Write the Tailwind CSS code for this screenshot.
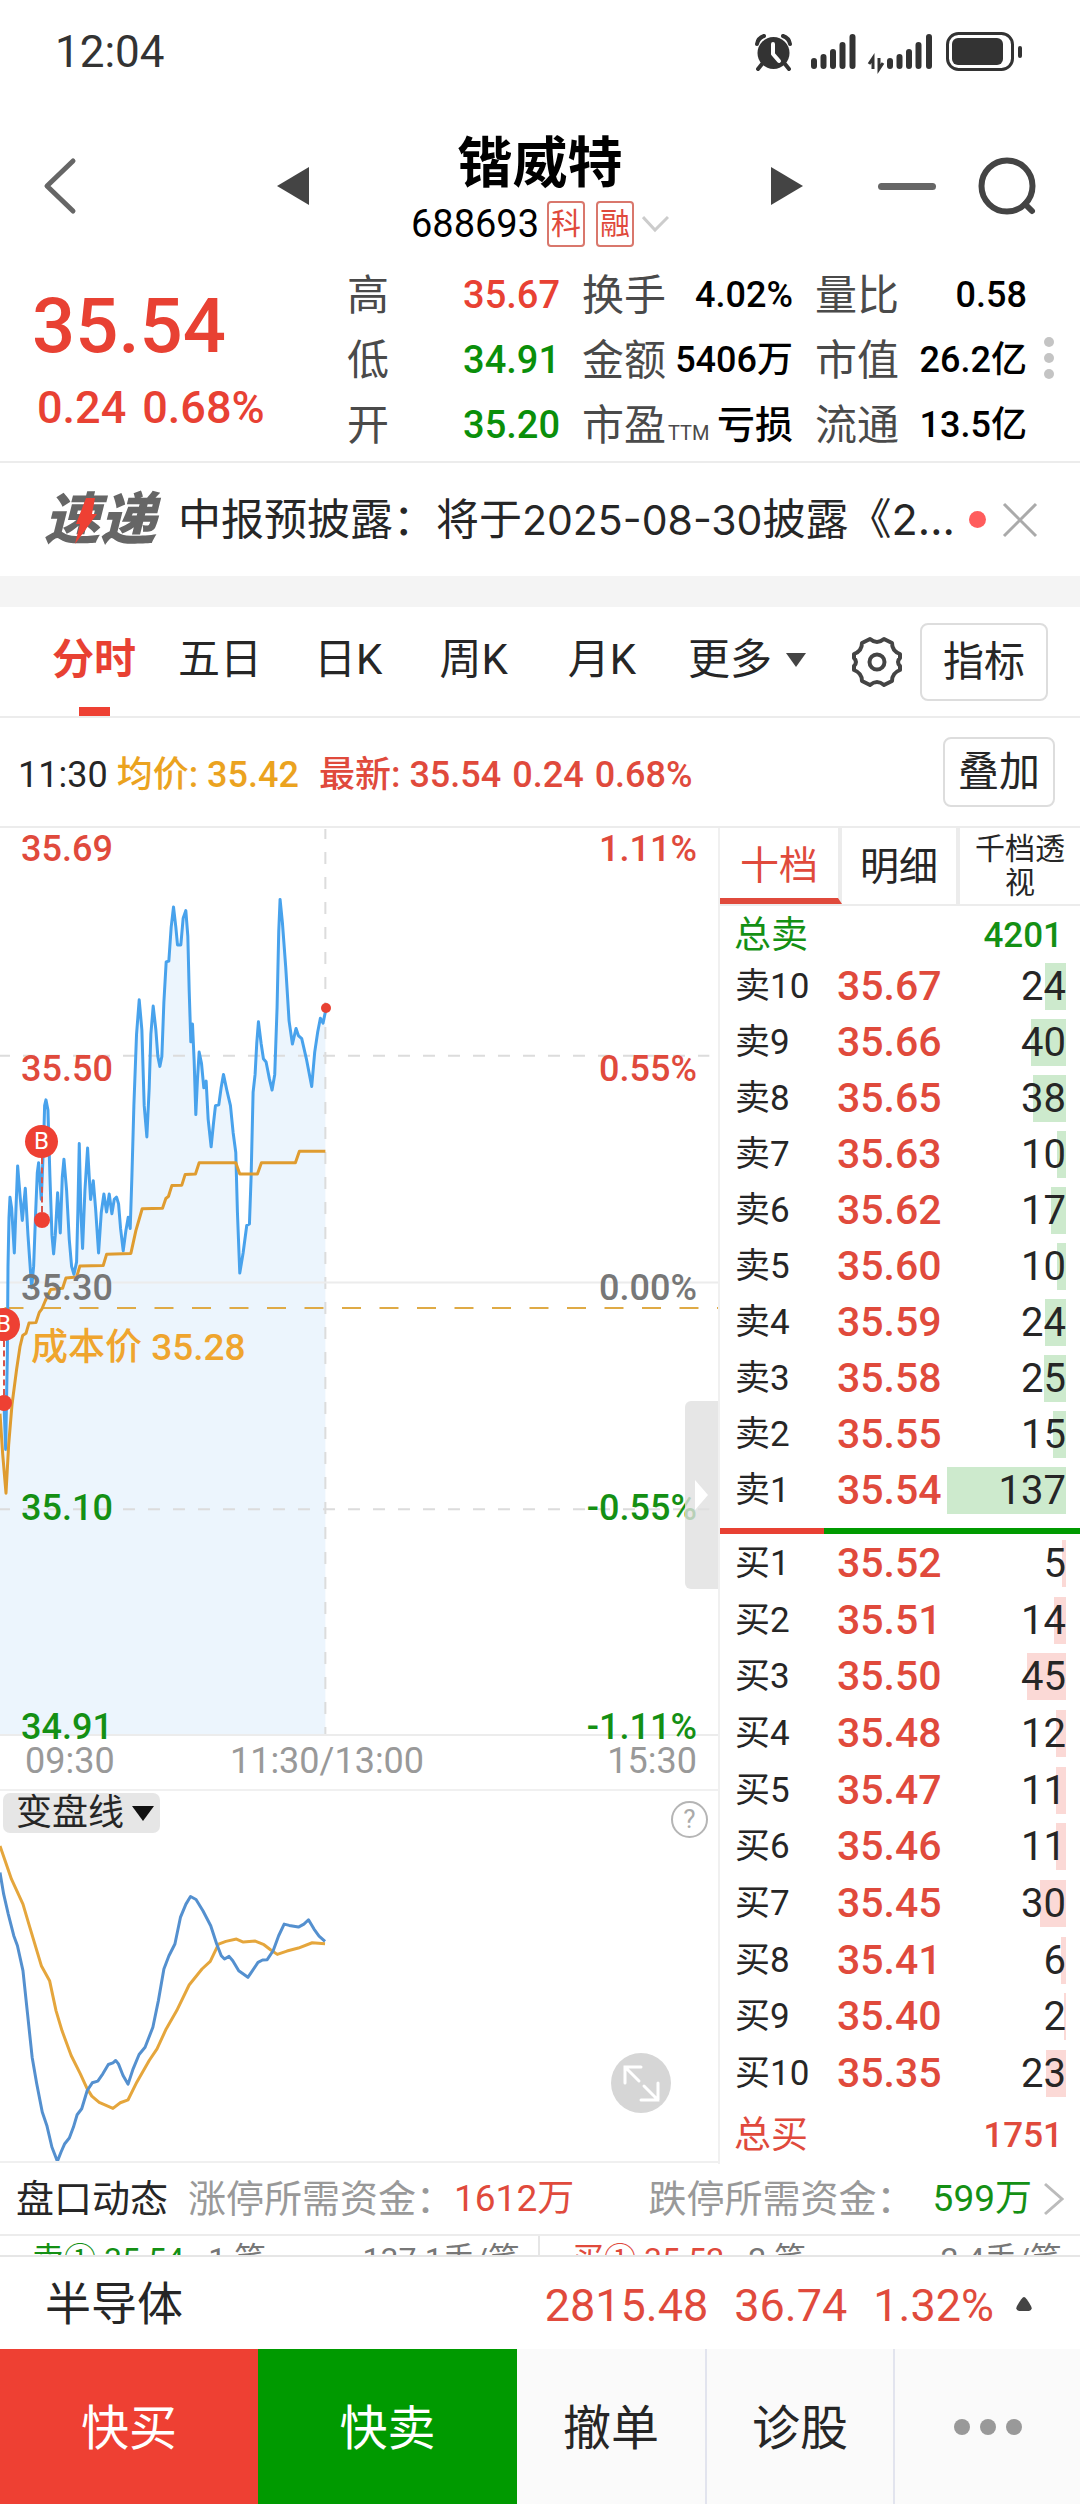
<!DOCTYPE html>
<html lang="zh-CN">
  <head>
    <meta charset="UTF-8" />
    <meta name="viewport" content="width=device-width, initial-scale=1.0" />
    <script src="https://cdn.jsdelivr.net/npm/@tailwindcss/browser@4"></script>
    <title>锴威特 688693</title>
  </head>
  <body class="bg-white text-[#262626] font-['Roboto','Noto_Sans_CJK_SC',sans-serif]">
    <!-- status bar -->
    <div class="flex items-center justify-between h-[104px] pl-[55px] pr-[58px] text-[#333]">
      <span class="text-[44px] leading-[52px]">12:04</span>
      <svg class="w-[268px] h-[44px]" viewBox="754 30 268 44" fill="#333" aria-hidden="true">
        <circle cx="773.5" cy="53" r="16" />
        <path d="M762 64l-4 5M785 64l4 5" stroke="#333" stroke-width="4" stroke-linecap="round" />
        <path d="M757 44q1-6 7-8M790 44q-1-6-7-8" stroke="#333" stroke-width="4" stroke-linecap="round" fill="none" />
        <path d="M773 44v10l6 7" stroke="#fff" stroke-width="4" stroke-linecap="round" stroke-linejoin="round" fill="none" />
        <path d="M814 61v5M823.500 57v9M833 52v14M842.500 45v21M852.500 37v29M890 61v5M899.500 57v9M909 52v14M918.500 45v21M929 37v29" stroke="#333" stroke-width="6" stroke-linecap="round" />
        <path d="M873 69V58l-4 6M879 58v11l4-6" stroke="#333" stroke-width="3" fill="none" />
        <rect x="947.500" y="33.500" width="65" height="36" rx="11" fill="none" stroke="#333" stroke-width="3" />
        <rect x="952" y="38" width="51" height="27" rx="6" />
        <rect x="1018" y="46" width="4" height="12" rx="2" />
      </svg>
    </div>

    <!-- title bar -->
    <header class="flex items-center h-[164px] pl-[40px] pr-[42px]">
      <button aria-label="返回" class="w-[40px]">
        <svg class="w-[40px] h-[60px]" viewBox="0 0 40 60" fill="none" stroke="#666" stroke-width="5" stroke-linecap="round" stroke-linejoin="round"><path d="M33 5L7 30l26 25" /></svg>
      </button>
      <div class="flex-1 flex items-center justify-between pl-[196px] pr-[74px]">
        <button aria-label="上一只">
          <svg class="w-[34px] h-[40px]" viewBox="0 0 34 40" fill="#444"><path d="M33 1v38L1 20z" /></svg>
        </button>
        <div class="flex flex-col items-center pt-[10px]">
          <h1 class="text-[55px] leading-[66px] font-bold text-black">锴威特</h1>
          <div class="flex items-center h-[56px] text-black">
            <span class="text-[38px] leading-[48px]">688693</span>
            <span class="ml-[8px] w-[38px] h-[46px] border-2 border-[#d9776c] rounded-[4px] text-[30px] leading-[42px] text-center text-[#e04a3c]">科</span>
            <span class="ml-[11px] w-[38px] h-[46px] border-2 border-[#d9776c] rounded-[4px] text-[30px] leading-[42px] text-center text-[#e04a3c]">融</span>
            <svg class="ml-[8px] w-[27px] h-[18px]" viewBox="0 0 27 18" fill="none" stroke="#ccc" stroke-width="3"><path d="M1 2l12 13L26 2" /></svg>
          </div>
        </div>
        <button aria-label="下一只">
          <svg class="w-[34px] h-[40px]" viewBox="0 0 34 40" fill="#444"><path d="M1 1v38l32-19z" /></svg>
        </button>
      </div>
      <div class="flex items-center gap-[40px]">
        <button aria-label="最小化"><span class="block w-[58px] h-[7px] rounded-full bg-[#666]"></span></button>
        <button aria-label="搜索">
          <svg class="w-[62px] h-[60px]" viewBox="0 0 62 60" fill="none" stroke="#444" stroke-width="6" stroke-linecap="round"><circle cx="31" cy="30" r="25.500" /><path d="M49 48l7 7" /></svg>
        </button>
      </div>
    </header>

    <!-- quote -->
    <section class="relative flex h-[195px] border-b-2 border-[#ececec]">
      <div class="w-[347px] pl-[32px] text-[#e84133] font-medium">
        <p class="pt-[12px] text-[76px] leading-[92px]">35.54</p>
        <p class="flex gap-[16px] pl-[5px] text-[45px] leading-[72px]"><span>0.24</span><span>0.68%</span></p>
      </div>
      <dl class="flex-1 grid grid-cols-[213px_211px_212px] gap-x-[22px] h-[195px] -mt-[5px] text-[42px] leading-[65px] text-[#4a4a4a]">
        <div class="flex justify-between"><dt>高</dt><dd class="text-[38px] font-medium text-[#e84133]">35.67</dd></div>
        <div class="flex justify-between"><dt>换手</dt><dd class="text-[36px] font-medium text-black">4.02%</dd></div>
        <div class="flex justify-between"><dt>量比</dt><dd class="text-[36px] font-medium text-black">0.58</dd></div>
        <div class="flex justify-between"><dt>低</dt><dd class="text-[38px] font-medium text-[#0a8f0a]">34.91</dd></div>
        <div class="flex justify-between"><dt>金额</dt><dd class="text-[36px] font-medium text-black">5406万</dd></div>
        <div class="flex justify-between"><dt>市值</dt><dd class="text-[36px] font-medium text-black">26.2亿</dd></div>
        <div class="flex justify-between"><dt>开</dt><dd class="text-[38px] font-medium text-[#0a8f0a]">35.20</dd></div>
        <div class="flex justify-between"><dt>市盈<span class="ml-[2px] text-[20px]">TTM</span></dt><dd class="text-[38px] font-medium text-black">亏损</dd></div>
        <div class="flex justify-between"><dt>流通</dt><dd class="text-[36px] font-medium text-black">13.5亿</dd></div>
      </dl>
      <button aria-label="更多行情" class="absolute right-[26px] top-[69px] flex flex-col gap-[6px]">
        <span class="size-[10px] rounded-full bg-[#c4c4c4]"></span>
        <span class="size-[10px] rounded-full bg-[#c4c4c4]"></span>
        <span class="size-[10px] rounded-full bg-[#c4c4c4]"></span>
      </button>
    </section>

    <!-- news -->
    <section class="flex items-center h-[113px] pl-[44px] pr-[42px]">
      <div class="relative w-[118px] text-[56px] leading-[60px] font-black italic text-[#666]">
        速递
        <svg class="absolute left-[28px] top-[8px] w-[26px] h-[46px]" viewBox="0 0 26 46" fill="#ee4033"><path d="M14 0h9l-3 16h5L3 46l5-20H4z" /></svg>
      </div>
      <a href="#" class="ml-[16px] flex-1 whitespace-nowrap text-[43px] leading-[60px] font-['Inter','Noto_Sans_CJK_SC',sans-serif]">中报预披露：将于<span class="text-[41px]">2025-08-30</span>披露《2…</a>
      <span class="size-[17px] rounded-full bg-[#ff5c5c]"></span>
      <button aria-label="关闭" class="ml-[16px]">
        <svg class="w-[36px] h-[36px]" viewBox="0 0 36 36" stroke="#aaa" stroke-width="3"><path d="M2 2l32 32M34 2L2 34" /></svg>
      </button>
    </section>
    <div class="h-[31px] bg-[#f4f4f4]"></div>

    <!-- period tabs -->
    <nav class="flex items-center h-[111px] pl-[52px] pr-[32px] border-b-2 border-[#ececec] text-[42px] leading-[60px]">
      <button class="relative h-full pb-[4px] font-bold text-[#e84133]">分时<span class="absolute left-[27px] bottom-0 w-[31px] h-[9px] bg-[#ee4033]"></span></button>
      <button class="ml-[42px] pb-[4px]">五日</button>
      <button class="ml-[52px] pb-[4px]">日K</button>
      <button class="ml-[57px] pb-[4px]">周K</button>
      <button class="ml-[60px] pb-[4px]">月K</button>
      <button class="ml-[52px] pb-[4px] flex items-center gap-[14px]">更多
        <svg class="w-[20px] h-[14px]" viewBox="0 0 20 14" fill="#444"><path d="M0 0h20L10 14z" /></svg>
      </button>
      <button aria-label="设置" class="ml-auto">
        <svg class="w-[54px] h-[54px]" viewBox="0 0 54 54" fill="none" stroke="#444" stroke-width="4" stroke-linejoin="round">
          <path d="M20 4q7 6 14 0l8 4q0 8 8 11v4q-4 4 0 8v4q-8 3-8 11l-8 4q-7-6-14 0l-8-4q0-8-8-11v-4q4-4 0-8v-4q8-3 8-11z" />
          <circle cx="27" cy="27" r="7.500" />
        </svg>
      </button>
      <button class="ml-[16px] w-[128px] h-[78px] border-2 border-[#ddd] rounded-[8px] text-[41px]">指标</button>
    </nav>

    <div class="flex items-center justify-between h-[108px] pl-[18px] pr-[25px] text-[36px] leading-[48px] font-medium">
      <p class="flex pt-[5px]">
        <span class="font-normal">11:30</span>
        <span class="ml-[9px] text-[#eba31f]">均价: 35.42</span>
        <span class="ml-[20px] flex gap-[11px] text-[#e04a3c]"><span>最新: 35.54</span><span>0.24</span><span>0.68%</span></span>
      </p>
      <button class="w-[112px] h-[70px] border-2 border-[#ddd] rounded-[8px] text-[41px] font-normal">叠加</button>
    </div>

    <main class="grid grid-cols-3 border-t-2 border-[#ececec]">
      <!-- charts -->
      <div class="col-span-2 border-r-2 border-[#f0f0f0]">
        <div class="relative h-[908px]">
          <svg class="w-full h-full" viewBox="0 18 2156 2034" preserveAspectRatio="none" fill="none">
            <polygon id="area" fill="#ecf5fd" />
            <g stroke="#dcdcdc" stroke-width="2">
              <path d="M0 528H2130M0 1544H2130M977 20V2052" stroke-dasharray="12 13" stroke-dashoffset="2" vector-effect="non-scaling-stroke" />
              <path d="M0 1036H2160M0 2050H2160" stroke="#ececec" vector-effect="non-scaling-stroke" />
            </g>
            <path d="M0 1093H2160" stroke="#dfaa45" stroke-width="2" stroke-dasharray="19 18.500" stroke-dashoffset="33" vector-effect="non-scaling-stroke" />
            <polyline id="price" stroke="#48a2ec" stroke-width="3" stroke-linejoin="round" vector-effect="non-scaling-stroke" points="12,1307 17,1410 22,1200 24,1000 27,890 30,845 35,870 43,970 48,870 53,775 60,840 67,897 76,825 84,930 95,1048 101,1000 107,880 112,790 116,768 124,850 131,720 134,640 138,627 144,650 150,800 156,930 161,972 166,930 173,835 181,925 187,800 192,760 200,830 208,940 215,1000 222,1018 230,990 234,870 238,725 243,880 248,960 255,830 263,735 268,800 272,850 280,808 287,870 296,970 304,880 312,838 320,878 328,838 336,882 343,850 350,845 356,860 362,915 370,965 378,920 385,890 391,915 396,800 402,640 410,480 418,403 426,470 433,640 441,710 448,600 453,480 460,417 468,470 474,530 480,552 486,530 492,410 499,318 507,316 514,240 521,195 528,240 533,280 543,280 550,220 558,203 564,260 568,380 573,497 578,457 583,540 588,660 593,580 598,520 605,545 612,600 619,585 625,670 634,732 641,680 647,640 657,638 664,600 671,570 681,605 692,640 700,700 708,745 713,880 720,1015 730,970 741,908 749,905 754,800 760,610 766,570 771,500 776,452 784,500 791,535 799,542 809,580 817,605 825,570 832,420 837,250 841,178 848,230 858,330 868,450 878,502 889,467 896,483 906,490 920,535 936,597 945,520 954,475 962,444 970,455 977,430" />
            <polyline stroke="#df9c30" stroke-width="3" stroke-linejoin="round" vector-effect="non-scaling-stroke" points="0,1330 8,1420 18,1508 26,1400 36,1310 50,1230 60,1180 68,1155 78,1150 87,1127 108,1126 118,1103 126,1095 136,1077 152,1052 188,1049 198,1026 230,1024 240,999 310,998 320,973 393,971 408,920 427,871 488,870 498,848 506,843 516,819 546,818 556,794 587,793 598,768 708,768 720,793 773,793 785,768 887,768 899,742 977,742" />
          </svg>

          <div class="absolute inset-x-0 top-[2px] h-[916px] flex flex-col justify-between px-[21px] text-[36px] leading-[38px] font-medium">
            <p class="flex justify-between text-[#e04a3c]"><span>35.69</span><span>1.11%</span></p>
            <p class="flex justify-between text-[#e04a3c]"><span>35.50</span><span>0.55%</span></p>
            <p class="flex justify-between text-[#777]"><span>35.30</span><span>0.00%</span></p>
            <p class="flex justify-between text-[#149014]"><span>35.10</span><span>-0.55%</span></p>
            <p class="flex justify-between text-[#149014]"><span>34.91</span><span>-1.11%</span></p>
          </div>
          <p class="absolute left-[31px] top-[496px] text-[37px] leading-[48px] font-medium text-[#efa52e]">成本价 35.28</p>

          <!-- buy markers -->
          <div class="absolute left-[25px] top-[297px] w-[33px] flex flex-col items-center">
            <span class="size-[33px] rounded-full bg-[#ee4033] text-white text-[24px] leading-[33px] text-center">B</span>
            <span class="h-[54px] border-l-2 border-dashed border-[#d9534a]"></span>
            <span class="size-[16px] rounded-full bg-[#ee4033]"></span>
          </div>
          <div class="absolute left-0 top-[480px] w-[20px] h-[104px] overflow-hidden">
            <div class="absolute right-0 top-0 w-[33px] flex flex-col items-center">
              <span class="size-[33px] rounded-full bg-[#ee4033] text-white text-[24px] leading-[33px] text-center">B</span>
              <span class="h-[54px] border-l-2 border-dashed border-[#d9534a]"></span>
              <span class="size-[16px] rounded-full bg-[#ee4033]"></span>
            </div>
          </div>
          <span class="absolute left-[321px] top-[175px] size-[10px] rounded-full bg-[#e84133]"></span>

          <button aria-label="收起盘口" class="absolute right-0 top-[573px] w-[33px] h-[188px] flex items-center justify-center rounded-l-[6px] bg-[#e0e0e0]/80">
            <svg class="w-[13px] h-[30px]" viewBox="0 0 13 30" fill="#fff"><path d="M0 0v30l13-15z" /></svg>
          </button>
        </div>

        <div class="flex justify-between h-[53px] pl-[25px] pr-[21px] text-[36px] leading-[50px] text-[#999]">
          <span>09:30</span><span class="-ml-[68px]">11:30/13:00</span><span>15:30</span>
        </div>

        <div class="relative h-[374px] border-y-2 border-[#f0f0f0]">
          <svg class="w-full h-full" viewBox="0 30 1564 1112" preserveAspectRatio="none" fill="none" stroke-width="3" stroke-linejoin="round">
            <polyline stroke="#e5a63c" vector-effect="non-scaling-stroke" points="0,195 10,235 25,295 50,370 65,440 90,555 108,600 122,690 135,750 155,825 175,880 190,925 200,947 216,966 246,984 262,967 279,958 298,905 325,840 342,805 362,745 385,690 412,613 440,565 458,542 476,490 492,482 515,475 530,484 556,481 575,492 590,508 604,521 625,511 650,502 680,486 708,489" />
            <polyline stroke="#5490cf" vector-effect="non-scaling-stroke" points="0,275 8,340 18,400 30,465 38,495 50,570 60,700 70,830 80,910 92,995 102,1035 113,1100 125,1143 133,1115 141,1090 151,1073 160,1040 168,1003 178,985 190,930 201,907 213,902 224,880 236,852 246,847 252,840 258,850 268,885 279,911 290,865 303,822 316,800 333,740 345,660 357,565 368,525 381,490 393,410 405,370 415,347 427,356 442,390 459,435 472,490 482,525 489,535 499,527 507,540 520,570 540,590 550,570 562,545 572,538 582,537 595,510 607,465 619,430 630,434 650,439 662,430 672,417 684,445 695,466 708,482" />
          </svg>
          <button class="absolute left-[3px] top-[2px] flex items-center gap-[8px] h-[40px] pl-[13px] pr-[6px] rounded-[7px] bg-[#e6e6e6] text-[36px] leading-[40px]">变盘线
            <svg class="w-[22px] h-[15px]" viewBox="0 0 22 15" fill="#111"><path d="M0 0h22L11 15z" /></svg>
          </button>
          <button aria-label="说明" class="absolute right-[10px] top-[10px] size-[37px] rounded-full border-2 border-[#b5b5b5] text-[26px] leading-[33px] text-[#aaa]">?</button>
          <button aria-label="全屏" class="absolute right-[47px] top-[262px]">
            <svg class="size-[60px]" viewBox="0 0 60 60" fill="none" stroke="#fff" stroke-width="3" stroke-linecap="round"><circle cx="30" cy="30" r="30" fill="#d6d6d6" stroke="none" /><path d="M30 14H14v16M14 14l14 14M30 47h17V30M47 47L33 33" /></svg>
          </button>
        </div>
      </div>

      <!-- order book -->
      <div class="flex flex-col">
        <div class="grid grid-cols-[122fr_118fr_120fr] h-[78px] border-b-2 border-[#ececec] divide-x-4 divide-[#ececec]">
          <button class="pt-[6px] border-b-6 border-b-[#e04a3c] text-[39px] leading-[48px] text-[#e04a3c]">十档</button>
          <button class="pt-[2px] text-[39px] leading-[48px]">明细</button>
          <button class="px-[12px] text-[30px] leading-[34px]">千档透视</button>
        </div>
        <div class="flex justify-between items-center h-[52px] pl-[14px] pr-[17px] pt-[8px] text-[37px] text-[#149014]">
          <span>总卖</span><span class="text-[35px] font-medium">4201</span>
        </div>
        <table class="w-full"><tbody id="asks"></tbody></table>
        <div class="flex h-[6px] mt-[10px]"><span class="w-[29%] bg-[#e84133]"></span><span class="flex-1 bg-[#009a00]"></span></div>
        <table class="w-full h-[567px] mt-px"><tbody id="bids"></tbody></table>
        <div class="flex-1 flex justify-between items-center pl-[14px] pr-[17px] pt-[6px] text-[37px] text-[#e04a3c]">
          <span>总买</span><span class="text-[35px] font-medium">1751</span>
        </div>
      </div>
    </main>

    <!-- order flow -->
    <a href="#" class="flex items-center h-[72px] pl-[16px] pr-[16px] border-b-2 border-[#ececec] text-[38px] leading-[48px] text-[#999]">
      <span class="text-[#262626]">盘口动态</span>
      <span class="ml-[20px]">涨停所需资金：</span>
      <span class="text-[37px] text-[#e04a3c]">1612万</span>
      <span class="ml-auto">跌停所需资金：</span>
      <span class="ml-[18px] text-[37px] text-[#149014]">599万</span>
      <svg class="ml-[11px] w-[21px] h-[34px]" viewBox="0 0 21 34" fill="none" stroke="#bbb" stroke-width="3"><path d="M2 2l17 15L2 32" /></svg>
    </a>
    <div class="grid grid-cols-2 h-[21px] overflow-hidden border-b-2 border-[#e6e6e6] text-[32px] leading-[46px] text-[#777]">
      <div class="flex h-[60px] pl-[32px] pr-[18px] border-r-2 border-[#e6e6e6]"><span class="text-[#149014]">卖① 35.54</span><span class="ml-[24px]">1 笔</span><span class="ml-auto">137.1手/笔</span></div>
      <div class="flex h-[60px] pl-[32px] pr-[18px]"><span class="text-[#e04a3c]">买① 35.52</span><span class="ml-[24px]">2 笔</span><span class="ml-auto">2.4手/笔</span></div>
    </div>

    <!-- sector index -->
    <div class="flex items-center h-[92px] pl-[45px] pr-[48px] pt-[2px] text-[46px] leading-[60px]">
      <span>半导体</span>
      <span class="ml-auto pt-[4px] flex gap-[26px] text-[45px] text-[#e04a3c]"><span>2815.48</span><span>36.74</span><span>1.32%</span></span>
      <svg class="ml-[22px] w-[16px] h-[14px]" viewBox="0 0 16 14" fill="#444"><path d="M8 0q2 0 7 9 2 4-2 5H3q-4-1-2-5Q6 0 8 0z" /></svg>
    </div>

    <footer class="grid grid-cols-[258fr_259fr_188fr_190fr_185fr] h-[156px] text-[48px] leading-[60px]">
      <button class="pt-[4px] bg-[#ee4033] text-white">快买</button>
      <button class="pt-[4px] bg-[#009a00] text-white">快卖</button>
      <button class="pt-[4px] bg-[#fafafa]">撤单</button>
      <button class="pt-[4px] bg-[#fafafa] border-x-2 border-[#e2e4ee]">诊股</button>
      <button aria-label="更多" class="flex items-center justify-center gap-[10px] bg-[#fafafa]">
        <span class="size-[16px] rounded-full bg-[#999]"></span>
        <span class="size-[16px] rounded-full bg-[#999]"></span>
        <span class="size-[16px] rounded-full bg-[#999]"></span>
      </button>
    </footer>

    <script>
      const asks = [
        ["卖10", "35.67", 24],
        ["卖9", "35.66", 40],
        ["卖8", "35.65", 38],
        ["卖7", "35.63", 10],
        ["卖6", "35.62", 17],
        ["卖5", "35.60", 10],
        ["卖4", "35.59", 24],
        ["卖3", "35.58", 25],
        ["卖2", "35.55", 15],
        ["卖1", "35.54", 137],
      ];
      const bids = [
        ["买1", "35.52", 5],
        ["买2", "35.51", 14],
        ["买3", "35.50", 45],
        ["买4", "35.48", 12],
        ["买5", "35.47", 11],
        ["买6", "35.46", 11],
        ["买7", "35.45", 30],
        ["买8", "35.41", 6],
        ["买9", "35.40", 2],
        ["买10", "35.35", 23],
      ];
      const maxQty = 137;

      function renderBook(id, rows, trClass, barClass) {
        document.getElementById(id).innerHTML = rows
          .map(
            ([name, price, qty]) => `
            <tr class="${trClass}">
              <th class="w-[117px] pl-[15px] text-left text-[35px] leading-[47px] font-normal">${name}</th>
              <td class="text-[41px] leading-[47px] font-medium text-[#e04a3c]">${price}</td>
              <td class="w-[133px] pr-[14px]">
                <div class="relative h-[47px] text-right text-[40px] leading-[47px]">
                  <span class="${barClass}" style="width: ${(qty / maxQty) * 100}%"></span>
                  <span class="relative">${qty}</span>
                </div>
              </td>
            </tr>`
          )
          .join("");
      }

      renderBook("asks", asks, "h-[56px]", "absolute right-0 inset-y-0 bg-[#cdeacd]");
      renderBook("bids", bids, "h-[56px]", "absolute right-0 inset-y-0 bg-[#fbd9d6]");

      // fill under the price line
      const points = document.getElementById("price").getAttribute("points");
      document
        .getElementById("area")
        .setAttribute("points", `0,2052 0,1307 ${points} 977,2052`);
    </script>
  </body>
</html>
